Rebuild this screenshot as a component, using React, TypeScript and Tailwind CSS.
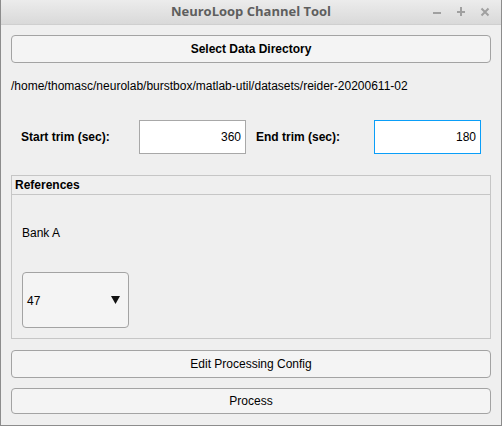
import React from "react";

export default function App() {
  return (
    <div
      className="w-[502px] h-[426px] flex flex-col bg-[#efefef] border-x border-b border-[#8c8c8c] overflow-hidden"
      style={{ fontFamily: '"Liberation Sans", Arial, sans-serif' }}
    >
      {/* Title bar */}
      <div className="relative h-[25px] shrink-0 flex items-center justify-center bg-gradient-to-b from-[#ececec] to-[#d9d9d9] border-b border-[#cfcfcf]">
        <span
          className="text-[13px] font-bold text-[#5e5e5e]"
          style={{ fontFamily: '"Open Sans", "Noto Sans", sans-serif' }}
        >
          NeuroLoop Channel Tool
        </span>
        <div className="absolute right-[11px] top-0 h-full flex items-center gap-[14px]">
          <svg width="10" height="10" viewBox="0 0 10 10">
            <rect x="1" y="5" width="8" height="2" fill="#a0a0a0" />
          </svg>
          <svg width="10" height="10" viewBox="0 0 10 10">
            <rect x="1" y="4" width="8" height="2" fill="#a0a0a0" />
            <rect x="4" y="0" width="2" height="9" fill="#a0a0a0" />
          </svg>
          <svg width="10" height="10" viewBox="0 0 10 10">
            <path d="M1.5 1.5 L8.5 8.5 M8.5 1.5 L1.5 8.5" stroke="#a0a0a0" strokeWidth="2" />
          </svg>
        </div>
      </div>

      <div className="flex flex-col px-[10px] pt-[10px]">
        <button className="h-[28px] w-full rounded-[4px] border border-[#a3a3a3] bg-[#f4f4f4] text-[12px] font-bold text-black">
          Select Data Directory
        </button>

        <div className="mt-[16px] h-[14px] flex items-center text-[12px] text-black">
          /home/thomasc/neurolab/burstbox/matlab-util/datasets/reider-20200611-02
        </div>

        <div className="mt-[27px] flex items-center h-[34px]">
          <div className="w-[128px] pl-[10px] text-[12px] font-bold text-black">Start trim (sec):</div>
          <div className="w-[107px] h-[34px] bg-white border border-[#a8a8a8] flex items-center justify-end pr-[4px] text-[12px] text-black">
            360
          </div>
          <div className="w-[128px] pl-[10px] text-[12px] font-bold text-black">End trim (sec):</div>
          <div className="w-[107px] h-[34px] bg-white border border-[#0a9ef8] flex items-center justify-end pr-[4px] text-[12px] text-black">
            180
          </div>
        </div>

        <div className="mt-[21px] h-[164px] border border-[#c6c6c6] flex flex-col">
          <div className="h-[19px] border-b border-[#c6c6c6] flex items-center pl-[3px] text-[12px] font-bold text-black">
            References
          </div>
          <div className="pl-[10px] mt-[31px] text-[12px] text-black h-[14px] flex items-center">Bank A</div>
          <div className="ml-[10px] mt-[32px] w-[107px] h-[56px] rounded-[4px] border border-[#a3a3a3] bg-[#f4f4f4] flex items-center justify-between pl-[4px] pr-[8px] text-[12px] text-black">
            <span className="mt-[1px]">47</span>
            <svg width="9" height="8" viewBox="0 0 9 8">
              <path d="M0 0 L9 0 L4.5 8 Z" fill="#111" />
            </svg>
          </div>
        </div>

        <button className="mt-[11px] h-[28px] w-full rounded-[4px] border border-[#a3a3a3] bg-[#f4f4f4] text-[12px] text-black">
          Edit Processing Config
        </button>
        <button className="mt-[10px] h-[26px] w-full rounded-[4px] border border-[#a3a3a3] bg-[#f4f4f4] text-[12px] text-black">
          Process
        </button>
      </div>
    </div>
  );
}
